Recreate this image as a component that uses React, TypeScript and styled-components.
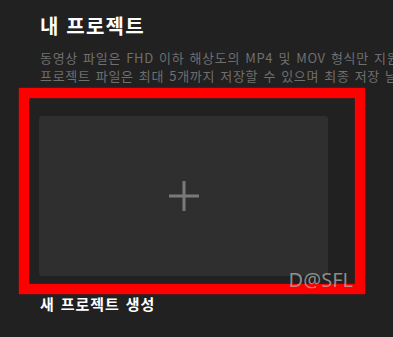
import React from "react";
import styled, { createGlobalStyle } from "styled-components";

const Global = createGlobalStyle`
  html, body { margin: 0; padding: 0; background: #212121; overflow: hidden; }
  body { font-family: "Noto Sans CJK KR", "Noto Sans", sans-serif; }
`;

const Page = styled.div`
  width: 393px;
  height: 337px;
  padding-top: 12px;
  box-sizing: border-box;
  overflow: hidden;
`;

const Header = styled.div`
  padding: 0 40px;
`;

const Title = styled.h1`
  margin: 0;
  font-size: 20px;
  line-height: 28px;
  font-weight: 700;
  letter-spacing: 1.2px;
  word-spacing: 1px;
  color: #ffffff;
`;

const Desc = styled.p`
  margin: 9px 0 0;
  font-size: 13px;
  line-height: 18px;
  letter-spacing: 0.7px;
  word-spacing: 1.5px;
  color: #6f6f6f;
  white-space: nowrap;
`;

const Highlight = styled.div`
  position: relative;
  margin: 3px 0 0 19px;
  width: 346px;
  box-sizing: border-box;
  border: 10px solid #ff0000;
  box-shadow: 0 0 2px rgba(255, 0, 0, 0.6), inset 0 0 2px rgba(255, 0, 0, 0.6);
  padding: 18px 27px 8px 10px;
`;

const NewCard = styled.div`
  height: 160px;
  border-radius: 3px;
  background: #2f2f2f;
  display: flex;
  align-items: center;
  justify-content: center;
`;

const Watermark = styled.span`
  position: absolute;
  right: 2px;
  bottom: -8px;
  font-family: "Noto Sans", sans-serif;
  font-size: 20px;
  line-height: 24px;
  color: rgba(175, 175, 175, 0.75);
`;

const Label = styled.div`
  padding: 0 40px;
  font-size: 15px;
  line-height: 20px;
  font-weight: 700;
  letter-spacing: 1px;
  word-spacing: 1.5px;
  color: #ffffff;
`;

export default function App() {
  return (
    <>
      <Global />
      <Page>
        <Header>
          <Title>내 프로젝트</Title>
          <Desc>
            동영상 파일은 FHD 이하 해상도의 MP4 및 MOV 형식만 지원됩니다.
            <br />
            프로젝트 파일은 최대 5개까지 저장할 수 있으며 최종 저장 날짜 기준으로 보관됩니다.
          </Desc>
        </Header>
        <Highlight>
          <NewCard>
            <svg width="32" height="32" viewBox="0 0 32 32">
              <path d="M16 1v30M1 16h30" stroke="#7a7a7a" strokeWidth="3" fill="none" />
            </svg>
          </NewCard>
          <Watermark>D@SFL</Watermark>
        </Highlight>
        <Label>새 프로젝트 생성</Label>
      </Page>
    </>
  );
}
